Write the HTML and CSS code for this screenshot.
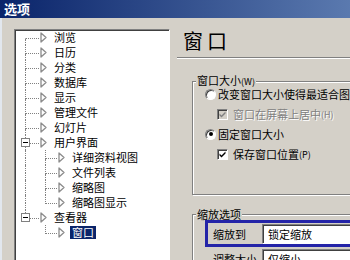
FILE: index.html
```html
<!DOCTYPE html>
<html lang="zh-CN">
  <head>
    <meta charset="UTF-8" />
    <title>选项</title>
    <link rel="stylesheet" href="styles.css">
  </head>
  <body>
    <div class="window">
      <div class="titlebar">选项</div>
      <div class="content">
        <div class="tree">
          <div class="row"><span class="cell first"></span><svg class="node-icon" viewBox="0 0 7 11"><path d="M1 1 L1 10 L6 5.5 Z" /></svg><span class="label">浏览</span></div>
          <div class="row"><span class="cell"></span><svg class="node-icon" viewBox="0 0 7 11"><path d="M1 1 L1 10 L6 5.5 Z" /></svg><span class="label">日历</span></div>
          <div class="row"><span class="cell"></span><svg class="node-icon" viewBox="0 0 7 11"><path d="M1 1 L1 10 L6 5.5 Z" /></svg><span class="label">分类</span></div>
          <div class="row"><span class="cell"></span><svg class="node-icon" viewBox="0 0 7 11"><path d="M1 1 L1 10 L6 5.5 Z" /></svg><span class="label">数据库</span></div>
          <div class="row"><span class="cell"></span><svg class="node-icon" viewBox="0 0 7 11"><path d="M1 1 L1 10 L6 5.5 Z" /></svg><span class="label">显示</span></div>
          <div class="row"><span class="cell"></span><svg class="node-icon" viewBox="0 0 7 11"><path d="M1 1 L1 10 L6 5.5 Z" /></svg><span class="label">管理文件</span></div>
          <div class="row"><span class="cell"></span><svg class="node-icon" viewBox="0 0 7 11"><path d="M1 1 L1 10 L6 5.5 Z" /></svg><span class="label">幻灯片</span></div>
          <div class="row"><span class="cell"><span class="expander"></span></span><svg class="node-icon" viewBox="0 0 7 11"><path d="M1 1 L1 10 L6 5.5 Z" /></svg><span class="label">用户界面</span></div>
          <div class="row"><span class="cell pipe"></span><span class="cell sub"></span><svg class="node-icon" viewBox="0 0 7 11"><path d="M1 1 L1 10 L6 5.5 Z" /></svg><span class="label">详细资料视图</span></div>
          <div class="row"><span class="cell pipe"></span><span class="cell sub"></span><svg class="node-icon" viewBox="0 0 7 11"><path d="M1 1 L1 10 L6 5.5 Z" /></svg><span class="label">文件列表</span></div>
          <div class="row"><span class="cell pipe"></span><span class="cell sub"></span><svg class="node-icon" viewBox="0 0 7 11"><path d="M1 1 L1 10 L6 5.5 Z" /></svg><span class="label">缩略图</span></div>
          <div class="row"><span class="cell pipe"></span><span class="cell sub last"></span><svg class="node-icon" viewBox="0 0 7 11"><path d="M1 1 L1 10 L6 5.5 Z" /></svg><span class="label">缩略图显示</span></div>
          <div class="row"><span class="cell last"><span class="expander"></span></span><svg class="node-icon" viewBox="0 0 7 11"><path d="M1 1 L1 10 L6 5.5 Z" /></svg><span class="label">查看器</span></div>
          <div class="row"><span class="cell pipe blank"></span><span class="cell sub last"></span><svg class="node-icon" viewBox="0 0 7 11"><path d="M1 1 L1 10 L6 5.5 Z" /></svg><span class="label selected">窗口</span></div>
        </div>

        <div class="page">
          <h1>窗口</h1>
          <div class="rule"></div>

          <fieldset class="group">
            <legend>窗口大小<small>(W)</small></legend>
            <div class="options">
              <div class="option"><span class="radio"></span>改变窗口大小使得最适合图片</div>
              <div class="option sub disabled">
                <span class="check">
                  <svg viewBox="0 0 9 9"><path d="M1.5 3.5 L3.5 5.5 L7.5 1.5 L7.5 3.5 L3.5 7.5 L1.5 5.5 Z" /></svg>
                </span>窗口在屏幕上居中 <small>(H)</small>
              </div>
              <div class="option"><span class="radio on"></span>固定窗口大小</div>
              <div class="option sub">
                <span class="check">
                  <svg viewBox="0 0 9 9"><path d="M1.5 3.5 L3.5 5.5 L7.5 1.5 L7.5 3.5 L3.5 7.5 L1.5 5.5 Z" /></svg>
                </span>保存窗口位置<small>(P)</small>
              </div>
            </div>
          </fieldset>

          <fieldset class="group zoom">
            <legend>缩放选项</legend>
            <div class="focus">
              <span class="field-label">缩放到</span>
              <div class="input">锁定缩放</div>
            </div>
            <div class="field">
              <span class="field-label">调整大小</span>
              <div class="input">仅缩小</div>
            </div>
          </fieldset>
        </div>
      </div>
    </div>
  </body>
</html>
```

FILE: styles.css
```css
* {
  margin: 0;
  padding: 0;
  box-sizing: border-box;
}

body {
  width: 350px;
  height: 260px;
  overflow: hidden;
  background: #d4d0c8;
  color: #000;
  font-family: "Noto Sans CJK SC", "Liberation Sans", sans-serif;
  font-size: 11px;
}

.window {
  height: 260px;
  overflow: hidden;
}

.titlebar {
  height: 18px;
  padding-left: 4px;
  color: #fff;
  font-size: 13px;
  font-weight: bold;
  line-height: 18px;
  background: linear-gradient(to right, #0a246a, #a6caf0) 0 0 / 680px 100% no-repeat;
}

.content {
  display: flex;
  align-items: flex-start;
  height: 242px;
  border-left: 2px solid #e2e7ee;
}

/* tree on the left */

.tree {
  flex: none;
  width: 156px;
  height: 250px;
  margin: 11px 5px 0 12px;
  background: #fff;
  border: 1px solid;
  border-color: #808080 #fff #fff #808080;
  box-shadow: inset 1px 1px 0 #404040;
  padding-left: 10px;
}

.row {
  display: flex;
  align-items: center;
  height: 15px;
  white-space: nowrap;
}

.cell {
  flex: none;
  align-self: stretch;
  width: 14px;
  display: flex;
  flex-direction: column;
  position: relative;
}

.cell::before {
  content: "";
  height: 8px;
  border-left: 1px dotted #808080;
  border-bottom: 1px dotted #808080;
}

.cell::after {
  content: "";
  flex: 1;
  border-left: 1px dotted #808080;
}

.cell.first::before {
  border-left-color: transparent;
}

.cell.last::after {
  border-left-color: transparent;
}

.cell.pipe {
  width: 20px;
}

.cell.pipe::before {
  border-bottom: 0;
}

.cell.blank::before,
.cell.blank::after {
  border-left-color: transparent;
}

.cell.sub {
  width: 12px;
}

.expander {
  position: absolute;
  left: -4px;
  top: 3px;
  width: 9px;
  height: 9px;
  border: 1px solid #808080;
  background: #fff;
}

.expander::before {
  content: "";
  display: block;
  height: 1px;
  margin: 3px 1px 0;
  background: #000;
}

.node-icon {
  flex: none;
  width: 7px;
  height: 11px;
  margin-left: 1px;
}

.node-icon path {
  fill: #fff;
  stroke: #8c8c8c;
  stroke-width: 1.3;
  stroke-linejoin: round;
}

.label {
  margin-left: 7px;
  line-height: 15px;
}

.label.selected {
  margin-left: 5px;
  padding: 0 2px;
  line-height: 13px;
  background: #0a246a;
  color: #fff;
}

/* settings page */

.page {
  flex: 1;
  padding-left: 2px;
}

h1 {
  margin: 9px 0 0 6px;
  font-size: 20px;
  font-weight: normal;
  line-height: 28px;
  letter-spacing: 4px;
}

.rule {
  margin-top: 2px;
  border-top: 1px solid #808080;
  border-bottom: 1px solid #fff;
}

.group {
  width: 200px;
  margin: 15px 0 0 15px;
  padding: 0 0 30px 12px;
  border: 1px solid #808080;
  box-shadow: inset 1px 1px 0 #fff, 1px 1px 0 #fff;
}

.group legend {
  margin-left: -9px;
  padding: 0 1px;
  line-height: 12px;
  background: #d4d0c8;
}

small {
  font-size: 9px;
}

.options {
  margin-top: -4px;
}

.option {
  display: flex;
  align-items: center;
  height: 20px;
  white-space: nowrap;
}

.option.sub {
  padding-left: 12px;
}

.option.disabled {
  color: #808080;
  text-shadow: 1px 1px 0 #fff;
}

.radio {
  flex: none;
  width: 11px;
  height: 11px;
  margin-right: 2px;
  border-radius: 50%;
  background: #fff;
  border: 1px solid;
  border-color: #808080 #fff #fff #808080;
  box-shadow: inset 1px 1px 0 #404040;
  display: flex;
  align-items: center;
  justify-content: center;
}

.radio.on::after {
  content: "";
  width: 4px;
  height: 4px;
  border-radius: 50%;
  background: #000;
}

.check {
  flex: none;
  width: 11px;
  height: 11px;
  margin-right: 5px;
  background: #fff;
  border: 1px solid;
  border-color: #808080 #fff #fff #808080;
  box-shadow: inset 1px 1px 0 #404040;
  display: flex;
}

.check svg {
  width: 9px;
  height: 9px;
}

.check path {
  fill: #000;
}

.disabled .check {
  background: #d4d0c8;
}

.disabled .check path {
  fill: #808080;
}

.group.zoom {
  margin-top: 13px;
  padding-bottom: 0;
}

.focus {
  display: flex;
  align-items: center;
  height: 27px;
  padding-left: 5px;
  border: 3px solid #2424a8;
  white-space: nowrap;
}

.field {
  display: flex;
  align-items: center;
  height: 20px;
  margin-top: 2px;
  padding-left: 8px;
  white-space: nowrap;
}

.field-label {
  flex: none;
  width: 49px;
}

.input {
  flex: none;
  width: 150px;
  height: 20px;
  padding-left: 5px;
  line-height: 18px;
  background: #fff;
  border: 1px solid;
  border-color: #808080 #fff #fff #808080;
  box-shadow: inset 1px 1px 0 #404040;
}
```
